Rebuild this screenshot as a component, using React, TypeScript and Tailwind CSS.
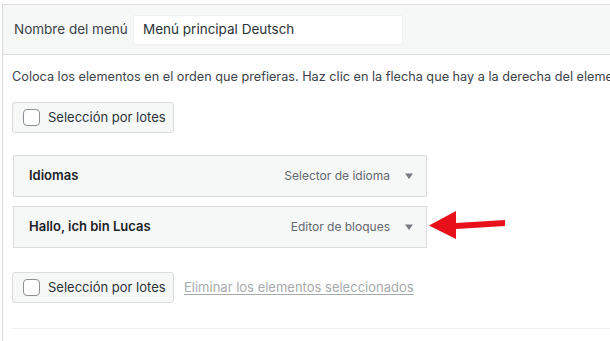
import React from "react";

function BulkButton() {
  return (
    <div className="flex h-[31px] w-[162px] shrink-0 items-center gap-[8px] whitespace-nowrap rounded-[3px] border border-[#dcdcde] bg-[#f6f7f7] pl-[10px] text-[13px] text-[#2c3338]">
      <span className="h-[17px] w-[17px] shrink-0 rounded-[4px] border border-[#8c8f94] bg-white" />
      <span>Selección por lotes</span>
    </div>
  );
}

function Item({ title, type }: { title: string; type: string }) {
  return (
    <div className="flex h-[42px] w-[414px] items-center border border-[#dcdcde] bg-[#f6f7f7] pl-[15px] pr-[12px]">
      <span className="flex-1 text-[13px] font-semibold text-[#1d2327]">{title}</span>
      <span className="text-[12px] text-[#646970]">{type}</span>
      <svg width="10" height="8" viewBox="0 0 10 8" className="ml-[14px]">
        <path d="M1 1.5 L9 1.5 L5 7 Z" fill="#787c82" />
      </svg>
    </div>
  );
}

export default function App() {
  return (
    <div
      className="h-[341px] w-[610px] overflow-hidden bg-white pt-[4px]"
      style={{ fontFamily: "Inter, 'Noto Sans', sans-serif" }}
    >
      <div className="ml-[2px] h-full border-l border-t border-[#dcdcde]">
        <div className="flex h-[50px] items-center border-b border-[#dcdcde] bg-[#f6f7f7] pl-[11px]">
          <span className="w-[119px] text-[13.5px] text-[#3c434a]">Nombre del menú</span>
          <div className="flex h-[30px] w-[270px] items-center rounded-[2px] border border-[#f0f0f1] bg-white pl-[9px] text-[13.5px] text-[#2c3338]">
            Menú principal Deutsch
          </div>
        </div>
        <div className="pl-[9px] pr-0">
          <p className="mt-[13px] whitespace-nowrap text-[12.7px] leading-[18px] text-[#3c434a]">
            Coloca los elementos en el orden que prefieras. Haz clic en la flecha que hay a la derecha del elemento para mostrar más opciones de configuración.
          </p>
          <div className="mt-[16px]">
            <BulkButton />
          </div>
          <div className="mt-[22px] flex flex-col gap-[9px] pl-[1px]">
            <Item title="Idiomas" type="Selector de idioma" />
            <div className="relative">
              <Item title="Hallo, ich bin Lucas" type="Editor de bloques" />
              <svg
                className="absolute left-[415px] top-0"
                width="80"
                height="42"
                viewBox="0 0 80 42"
              >
                <path d="M1 19.5 L28 5 L28 17 L77 14 L77 20 L28 23 L28 33 Z" fill="#e8101a" />
              </svg>
            </div>
          </div>
          <div className="mt-[24px] flex items-center gap-[10px]">
            <BulkButton />
            <span className="whitespace-nowrap text-[13px] text-[#a7aaad] underline underline-offset-2">
              Eliminar los elementos seleccionados
            </span>
          </div>
          <div className="mt-[25px] border-t border-[#f0f0f1]" />
        </div>
      </div>
    </div>
  );
}
